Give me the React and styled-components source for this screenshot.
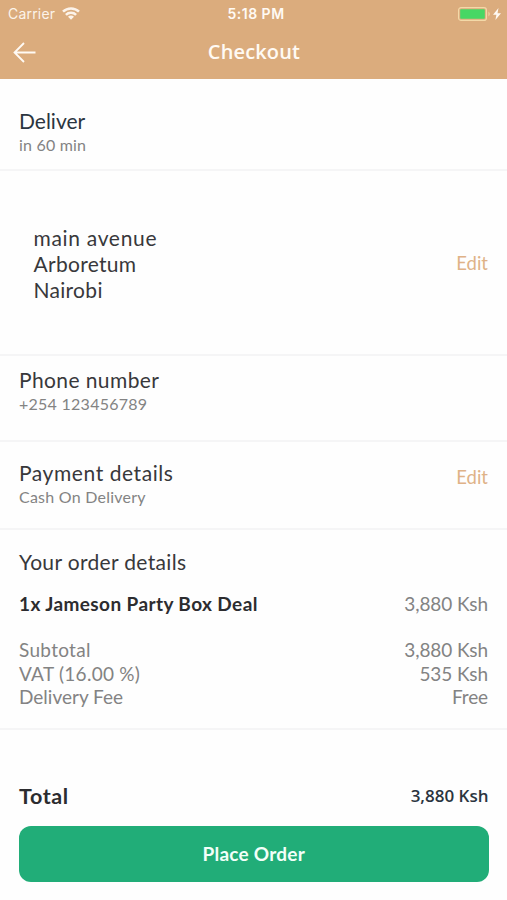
import React from 'react'
import styled, {createGlobalStyle} from "styled-components";

const palette = {
  tan: "#dbac7d",
  green: "#21ad78",
  dark: "#38383b",
  navy: "#2b3540",
  gray: "#838383",
  line: "#f5f5f6",
};

const GlobalStyle = createGlobalStyle`
* {
  box-sizing: border-box;
}
body {
  margin: 0;
  background: #fefefe;
  font-family: Lato, "Open Sans", sans-serif;
}
`;

const Screen = styled.div`
  display: flex;
  flex-direction: column;
  height: 900px;
  overflow: hidden;
`;

const Header = styled.header`
  height: 79px;
  background: ${palette.tan};
  color: #fffaf4;
`;

const StatusBar = styled.div`
  display: grid;
  grid-template-columns: 1fr auto 1fr;
  align-items: center;
  height: 27px;
  padding: 0 5px 0 8px;
  font-family: Inter, sans-serif;
  font-size: 14px;
`;

const Carrier = styled.div`
  display: flex;
  align-items: center;
  gap: 7px;
  opacity: 0.92;
  letter-spacing: 0.2px;
`;

const Clock = styled.div`
  padding-left: 2px;
  font-weight: 600;
  font-size: 14px;
  letter-spacing: 0.5px;
`;

const Power = styled.div`
  display: flex;
  align-items: center;
  justify-content: flex-end;
`;

const NavBar = styled.div`
  display: grid;
  grid-template-columns: 1fr auto 1fr;
  align-items: center;
  height: 50px;
  padding: 0 13px;
`;

const BackButton = styled.button`
  display: flex;
  width: 24px;
  padding: 0;
  border: 0;
  background: none;
  color: inherit;
`;

const NavTitle = styled.h1`
  margin: 0;
  padding-left: 1px;
  font-family: "Open Sans", sans-serif;
  font-size: 20px;
  font-weight: 600;
  line-height: 28px;
  letter-spacing: 0.15px;
`;

const Section = styled.section`
  display: flex;
  justify-content: space-between;
  align-items: ${props => props.$align || "flex-start"};
  height: ${props => props.$height}px;
  padding: ${props => props.$top || 0}px 19px 0;
  border-bottom: 2px solid ${palette.line};
`;

const OrderSection = styled(Section)`
  flex-direction: column;
  justify-content: flex-start;
  align-items: stretch;
`;

const Text = styled.span`
  letter-spacing: ${props => props.$spacing || 0}px;
`;

const Title = styled(Text).attrs({as: "h2"})`
  margin: 0;
  font-size: 21px;
  font-weight: 400;
  line-height: 28px;
  color: ${props => props.$color || palette.dark};
`;

const Subtitle = styled(Text).attrs({as: "p"})`
  margin: 0;
  font-size: 16px;
  line-height: 20px;
  color: ${palette.gray};
`;

const Address = styled.address`
  display: flex;
  flex-direction: column;
  padding: 2px 0 0 14.5px;
  font-style: normal;
  font-size: 21px;
  line-height: 26px;
  color: ${palette.dark};
`;

const EditLink = styled.a`
  margin-top: ${props => props.$top || 0}px;
  font-size: 18.5px;
  line-height: 24px;
  color: #dfb287;
  cursor: pointer;
`;

const Item = styled.div`
  display: flex;
  justify-content: space-between;
  margin: 16px 0 22px;
  font-size: 19px;
  line-height: 24px;
  color: ${palette.gray};
`;

const ItemName = styled(Text)`
  font-weight: 700;
  color: #2c2c2f;
`;

const Fee = styled.div`
  display: flex;
  justify-content: space-between;
  font-size: 19px;
  line-height: 23.5px;
  color: ${palette.gray};
`;

const Footer = styled.footer`
  display: flex;
  flex-direction: column;
  gap: 16px;
  padding: 52px 18.5px 0 19px;
`;

const TotalRow = styled.div`
  display: flex;
  justify-content: space-between;
  line-height: 28px;
`;

const TotalLabel = styled(Text)`
  font-size: 21.5px;
  font-weight: 700;
  color: #2c2c2f;
`;

const TotalPrice = styled(Text)`
  font-family: "Open Sans", sans-serif;
  font-size: 17px;
  font-weight: 600;
  color: ${palette.navy};
`;

const PlaceOrder = styled.button`
  height: 56px;
  padding: 0 0 2px;
  border: 0;
  border-radius: 12px;
  background: ${palette.green};
  color: #f2fff9;
  font-family: Lato, sans-serif;
  font-size: 19px;
  font-weight: 700;
  letter-spacing: 0.25px;
`;

const WifiIcon = () => (
    <svg width="18" height="13" viewBox="0 0 18 13" fill="none" stroke="currentColor" strokeWidth="2.5">
      <path d="M1 4.7a11.4 11.4 0 0 1 16 0"/>
      <path d="M3.9 7.9a7.2 7.2 0 0 1 10.2 0"/>
      <path d="M9 12.8 6 9.8a4.2 4.2 0 0 1 6 0z" fill="currentColor" stroke="none"/>
    </svg>);

const BatteryIcon = () => (
    <svg width="44" height="16" viewBox="0 0 44 16">
      <rect x="0.6" y="1.6" width="27.8" height="12.8" rx="2.5" fill="none" stroke="#f3d9a8" strokeWidth="1.2"/>
      <rect x="2.2" y="3.2" width="24.6" height="9.6" rx="0.8" fill="#47d764"/>
      <path d="M30.5 5.5q2.5 2.5 0 5z" fill="#f3d9a8"/>
      <path d="M40.500 2 35 8.800h3.400l-1 5.200L43 7.200h-3.500z" fill="#fffaf4"/>
    </svg>);

const BackIcon = () => (
    <svg width="24" height="22" viewBox="0 0 24 22" fill="none" stroke="currentColor" strokeWidth="1.8">
      <path d="M22.5 11.5H1.5M11 2 1.5 11.5 11 21"/>
    </svg>);

const fees = [
  {label: "Subtotal", price: "3,880 Ksh", spacing: 0.3},
  {label: "VAT (16.00 %)", price: "535 Ksh", spacing: 0.27},
  {label: "Delivery Fee", price: "Free", spacing: 0},
];

const App = () => (
    <Screen>
      <GlobalStyle/>
      <Header>
        <StatusBar>
          <Carrier>Carrier <WifiIcon/></Carrier>
          <Clock>5:18 PM</Clock>
          <Power><BatteryIcon/></Power>
        </StatusBar>
        <NavBar>
          <BackButton aria-label="Back"><BackIcon/></BackButton>
          <NavTitle>Checkout</NavTitle>
        </NavBar>
      </Header>
      <Section $height={92} $top={28}>
        <div>
          <Title $color={palette.navy}>Deliver</Title>
          <Subtitle $spacing={0.2}>in 60 min</Subtitle>
        </div>
      </Section>
      <Section $height={185} $align="center">
        <Address>
          <Text $spacing={0.68}>main avenue</Text>
          <Text $spacing={0.3}>Arboretum</Text>
          <Text $spacing={0.3}>Nairobi</Text>
        </Address>
        <EditLink>Edit</EditLink>
      </Section>
      <Section $height={86} $top={10}>
        <div>
          <Title $spacing={0.4}>Phone number</Title>
          <Subtitle $spacing={0.26}>+254 123456789</Subtitle>
        </div>
      </Section>
      <Section $height={88} $top={17}>
        <div>
          <Title $spacing={0.57}>Payment details</Title>
          <Subtitle $spacing={0.24}>Cash On Delivery</Subtitle>
        </div>
        <EditLink $top={6}>Edit</EditLink>
      </Section>
      <OrderSection $height={200} $top={18}>
        <Title $spacing={0.33}>Your order details</Title>
        <Item>
          <ItemName $spacing={0.4}>1x Jameson Party Box Deal</ItemName>
          <Text $spacing={-0.1}>3,880 Ksh</Text>
        </Item>
        {fees.map(fee => (
            <Fee key={fee.label}>
              <Text $spacing={fee.spacing}>{fee.label}</Text>
              <Text $spacing={-0.1}>{fee.price}</Text>
            </Fee>
        ))}
      </OrderSection>
      <Footer>
        <TotalRow>
          <TotalLabel $spacing={0.6}>Total</TotalLabel>
          <TotalPrice>3,880 Ksh</TotalPrice>
        </TotalRow>
        <PlaceOrder>Place Order</PlaceOrder>
      </Footer>
    </Screen>);

export default App;
